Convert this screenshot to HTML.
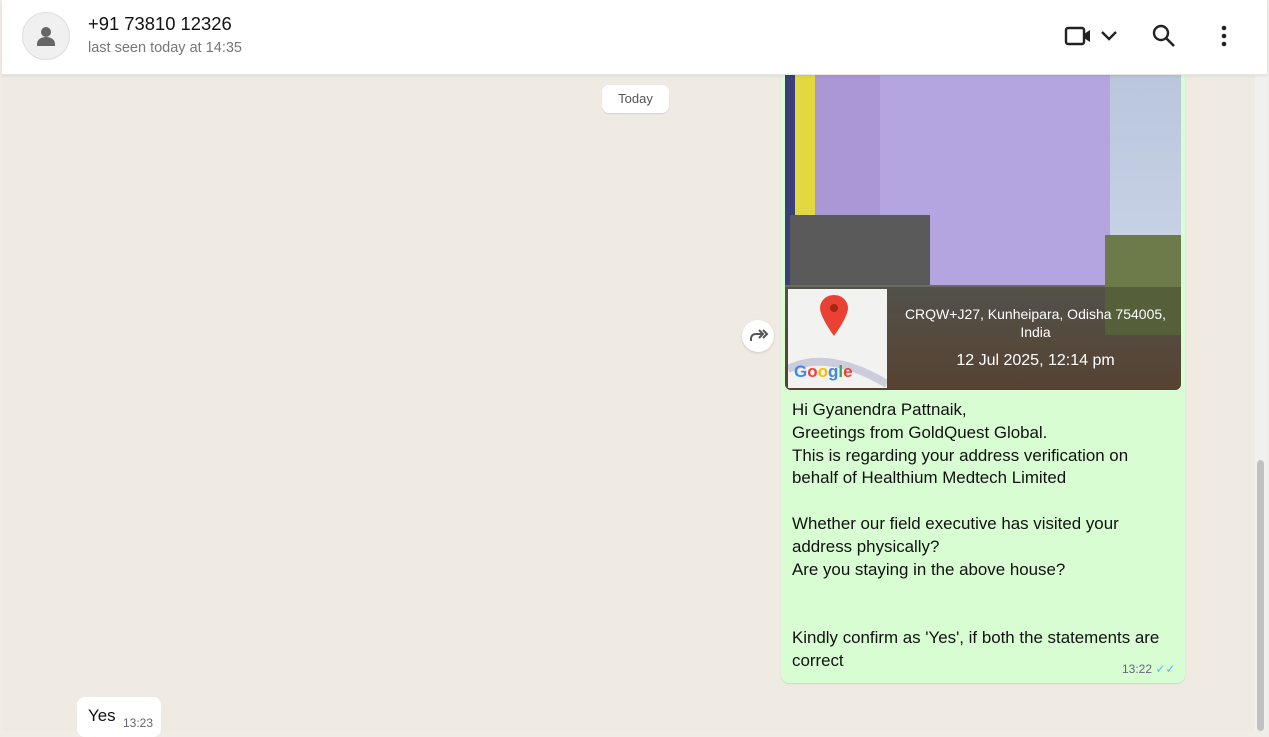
<!DOCTYPE html>
<html><head><meta charset="utf-8"><style>
*{margin:0;padding:0;box-sizing:border-box}
body{width:1269px;height:731px;overflow:hidden;background:#f1ede6;font-family:"Liberation Sans",sans-serif;position:relative}
.bg{position:absolute;left:2px;top:0;width:1253px;height:731px;background:#efeae2}
.hdr{position:absolute;left:2px;top:0;width:1265px;height:75px;background:#fff;border-bottom:1px solid #e6e6e6;box-shadow:0 1px 3px rgba(0,0,0,.08);z-index:10}
.av{position:absolute;left:20px;top:12px;width:48px;height:48px;border-radius:50%;background:#f0f0f0;border:1px solid #ddd}
.name{position:absolute;left:86px;top:13px;font-size:18.4px;color:#111}
.seen{position:absolute;left:86px;top:40px;font-size:14.5px;color:#777}
.today{position:absolute;left:602px;top:85px;width:67px;height:28px;background:#fff;border-radius:7px;font-size:13px;color:#555;text-align:center;line-height:28px;box-shadow:0 1px 1px rgba(0,0,0,.1)}
.bub{position:absolute;left:781px;top:60px;width:404px;height:623px;background:#d9fdd3;border-radius:8px;box-shadow:0 1px 1px rgba(0,0,0,.1)}
.img{position:absolute;left:785px;top:75px;width:396px;height:315px;border-radius:0 0 6px 6px;overflow:hidden;background:linear-gradient(180deg,#b9c6dc 0%,#c9d3e6 60%,#8a8f7a 100%)}
.txt{position:absolute;left:792px;top:399px;font-size:16.9px;line-height:22.8px;color:#111;white-space:pre}
.tm{position:absolute;left:1122px;top:662px;font-size:12px;color:#667}
.yes{position:absolute;left:77px;top:697px;width:84px;height:40px;background:#fff;border-radius:8px}
.sb{position:absolute;left:1255px;top:75px;width:12px;height:656px;background:#f0f0f0}
.thumb{position:absolute;left:1257px;top:460px;width:7px;height:271px;background:#c1c1c1;border-radius:4px}
.fw{position:absolute;left:742px;top:320px;width:32px;height:32px;border-radius:50%;background:#fff;box-shadow:0 1px 2px rgba(0,0,0,.15)}
</style></head><body>
<div class="bg"></div>
<div class="hdr">
<div class="av"><svg width="48" height="48" viewBox="0 0 48 48"><circle cx="23" cy="19" r="5" fill="#666"/><path d="M14 31c0-5 5-7 9-7s9 2 9 7v2H14z" fill="#666"/></svg></div>
<div class="name">+91 73810 12326</div>
<div class="seen">last seen today at 14:35</div>
<svg style="position:absolute;left:1062px;top:24px" width="60" height="26" viewBox="0 0 60 26"><rect x="2" y="4" width="18" height="16" rx="2" fill="none" stroke="#222" stroke-width="2.4"/><path d="M20 10l6-4v12l-6-4z" fill="#222"/><path d="M38 8l7 7 7-7" fill="none" stroke="#222" stroke-width="2.4"/></svg>
<svg style="position:absolute;left:1149px;top:23px" width="26" height="26" viewBox="0 0 26 26"><circle cx="10" cy="10" r="7" fill="none" stroke="#222" stroke-width="2.4"/><path d="M15 15l8 8" stroke="#222" stroke-width="2.6"/></svg>
<svg style="position:absolute;left:1214px;top:24px" width="16" height="26" viewBox="0 0 16 26"><circle cx="8" cy="4" r="2.3" fill="#222"/><circle cx="8" cy="12" r="2.3" fill="#222"/><circle cx="8" cy="20" r="2.3" fill="#222"/></svg>
</div>
<div class="today">Today</div>
<div class="bub"></div>
<div class="img">
<div style="position:absolute;left:0;top:0;width:10px;height:230px;background:#3a3f7a"></div>
<div style="position:absolute;left:10px;top:0;width:85px;height:230px;background:#e2d840"></div>
<div style="position:absolute;left:30px;top:0;width:295px;height:215px;background:#a997d6"></div>
<div style="position:absolute;left:95px;top:0;width:230px;height:210px;background:#b4a5e0"></div>
<div style="position:absolute;left:5px;top:140px;width:140px;height:70px;background:#5a5a5a"></div>
<div style="position:absolute;left:0;top:210px;width:396px;height:105px;background:linear-gradient(180deg,#6a6a60,#6f5540)"></div>
<div style="position:absolute;left:320px;top:160px;width:76px;height:100px;background:#6d7a4a"></div>
<div style="position:absolute;left:0;top:212px;width:396px;height:103px;background:rgba(0,0,0,.22)"></div>
<div style="position:absolute;left:3px;top:214px;width:99px;height:99px;background:#f2f2f0"><svg width="99" height="99"><path d="M0 80 Q40 60 99 95" stroke="#ccd" stroke-width="8" fill="none"/><path d="M46 6c-9 0-14 7-14 13 0 9 14 28 14 28s14-19 14-28c0-6-5-13-14-13z" fill="#e94235"/><circle cx="46" cy="19" r="4" fill="#a52714"/><text x="6" y="88" font-size="17" font-family="Liberation Sans" font-weight="bold" fill="#4285f4">G<tspan fill="#ea4335">o</tspan><tspan fill="#fbbc05">o</tspan><tspan fill="#4285f4">g</tspan><tspan fill="#34a853">l</tspan><tspan fill="#ea4335">e</tspan></text></svg></div>
<div style="position:absolute;left:105px;top:230px;width:291px;text-align:center;color:#fff;font-size:14px;line-height:18px">CRQW+J27, Kunheipara, Odisha 754005,<br>India</div>
<div style="position:absolute;left:105px;top:277px;width:291px;text-align:center;color:#fff;font-size:16px">12 Jul 2025, 12:14 pm</div>
</div>
<div class="fw"><svg width="32" height="32" viewBox="0 0 32 32"><path d="M9 21v-2c0-3 2-5 5-5h6M17 10l4 4-4 4M21 10l4 4-4 4" fill="none" stroke="#555" stroke-width="2"/></svg></div>
<div class="txt">Hi Gyanendra Pattnaik,
Greetings from GoldQuest Global.
This is regarding your address verification on
behalf of Healthium Medtech Limited

Whether our field executive has visited your
address physically?
Are you staying in the above house?


Kindly confirm as 'Yes', if both the statements are
correct</div>
<div class="tm">13:22 <span style="color:#53bdeb">✓✓</span></div>
<div class="yes"><span style="position:absolute;left:11px;top:9px;font-size:16.9px;color:#111">Yes</span><span style="position:absolute;left:46px;top:19px;font-size:12px;color:#667">13:23</span></div>
<div class="sb"></div><div class="thumb"></div>
</body></html>
